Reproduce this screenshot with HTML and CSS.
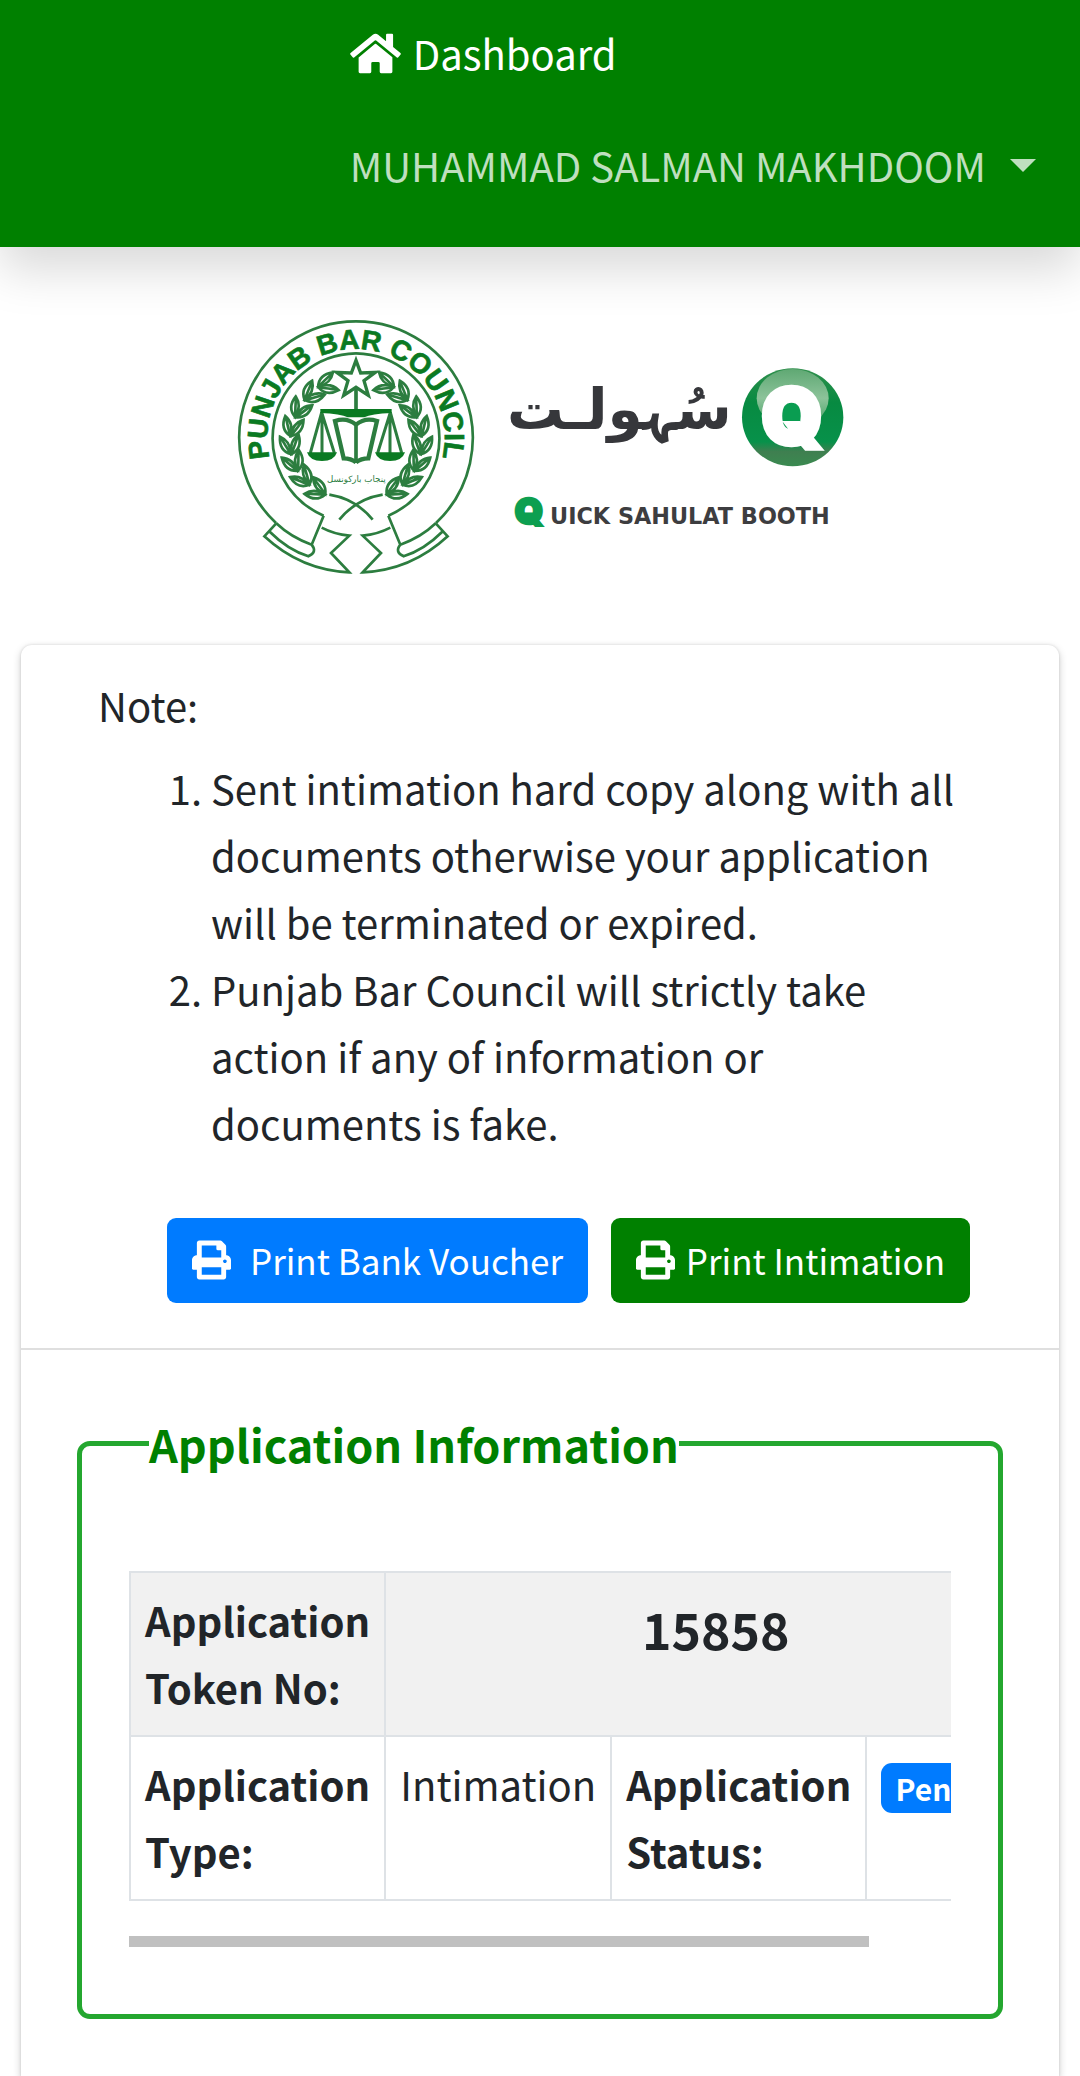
FILE: index.html
```html
<!DOCTYPE html>
<html lang="en">
<head>
<meta charset="utf-8">
<meta name="viewport" content="width=device-width, initial-scale=1">
<title>Punjab Bar Council</title>
<link rel="stylesheet" href="styles.css">
</head>
<body>
<svg class="sprite" aria-hidden="true">
  <symbol id="icon-print" viewBox="0 0 512 512">
    <path d="M448 192V77.250c0-8.490-3.370-16.620-9.370-22.630L393.370 9.370c-6-6-14.140-9.370-22.630-9.370H96C78.330 0 64 14.330 64 32v160c-35.350 0-64 28.650-64 64v112c0 8.840 7.160 16 16 16h48v96c0 17.670 14.330 32 32 32h320c17.670 0 32-14.330 32-32v-96h48c8.840 0 16-7.160 16-16V256c0-35.350-28.650-64-64-64zm-64 256H128v-96h256v96zm0-224H128V64h192v48c0 8.840 7.160 16 16 16h48v96zm48 72c-13.250 0-24-10.750-24-24s10.750-24 24-24 24 10.750 24 24-10.750 24-24 24z"/>
  </symbol>
</svg>

<nav class="navbar">
  <ul class="nav-list">
    <li>
      <a class="nav-link nav-link-active" href="#">
        <svg class="icon-home" viewBox="0 0 576 512" aria-hidden="true"><path d="M280.370 148.260L96 300.110V464a16 16 0 0 0 16 16l112.060-.29a16 16 0 0 0 15.920-16V368a16 16 0 0 1 16-16h64a16 16 0 0 1 16 16v95.640a16 16 0 0 0 16 16.050L464 480a16 16 0 0 0 16-16V300L295.670 148.260a12.190 12.190 0 0 0-15.300 0zM571.600 251.470L488 182.560V44.050a12 12 0 0 0-12-12h-56a12 12 0 0 0-12 12v72.610L318.470 43a48 48 0 0 0-61 0L4.340 251.470a12 12 0 0 0-1.600 16.900l25.500 31A12 12 0 0 0 45.150 301l235.220-193.740a12.190 12.190 0 0 1 15.300 0L530.900 301a12 12 0 0 0 16.900-1.600l25.500-31a12 12 0 0 0-1.700-16.930z"/></svg>
        Dashboard
      </a>
    </li>
    <li>
      <button class="nav-link nav-user" type="button" aria-haspopup="true">MUHAMMAD SALMAN MAKHDOOM<span class="caret"></span></button>
    </li>
  </ul>
</nav>

<header class="logos">
  <svg class="logo-council" viewBox="48 58 714 768" role="img" aria-label="Punjab Bar Council">
    <defs>
      <path id="ring-text" d="M175 548A266 266 0 1 1 635 548"/>
      <g id="leaves">
        <path d="M0 26Q-36 12-28-30Q2-14 0 26ZM0 26Q36 12 28-30Q-2-14 0 26ZM0 26Q-16-4-24-24M0 26Q16-4 24-24"/>
      </g>
      <g id="half">
        <path d="M165 670A350 350 0 0 1 405 65"/>
        <path d="M308 648A254 254 0 0 1 405 161"/>
        <path d="M308 648L272 735M165 670Q210 713 272 735Q290 758 262 770Q200 750 147 697M165 672L130 710Q240 812 385 818L330 760L385 708Q340 704 302 684"/>
        <path d="M325 585Q405 598 455 660"/>
        <use href="#leaves" transform="translate(316 254) rotate(72)"/>
        <use href="#leaves" transform="translate(270 284) rotate(48)"/>
        <use href="#leaves" transform="translate(235 330) rotate(28)"/>
        <use href="#leaves" transform="translate(214 384) rotate(12)"/>
        <use href="#leaves" transform="translate(208 438) rotate(-6)"/>
        <use href="#leaves" transform="translate(220 490) rotate(-24)"/>
        <use href="#leaves" transform="translate(248 536) rotate(-42)"/>
        <use href="#leaves" transform="translate(290 572) rotate(-62)"/>
        <path d="M302 338L268 460M302 338L340 460M303 340V460" stroke-width="9"/>
        <path d="M258 458H348Q340 484 303 484Q266 484 258 458Z" fill="#0a7a22" stroke="none"/>
        <path d="M405 375Q378 352 342 364L368 476Q390 476 405 488" stroke-width="13"/>
      </g>
    </defs>
    <g class="council-lines">
      <use href="#half"/>
      <use href="#half" transform="translate(810 0) scale(-1 1)"/>
      <path d="M405 182L419 220L463 218L429 243L442 287L405 263L368 287L381 243L347 218L391 220Z" stroke-width="10"/>
      <path d="M405 264V336M405 372V490" stroke-width="11"/>
      <path d="M298 328H512V340Q450 342 430 353H380Q360 342 298 340Z" class="council-solid"/>
    </g>
    <text class="council-name"><textPath href="#ring-text" startOffset="50%" text-anchor="middle">PUNJAB BAR COUNCIL</textPath></text>
    <text class="council-urdu" x="406" y="546" text-anchor="middle">پنجاب بارکونسل</text>
  </svg>

  <svg class="logo-sahulat" viewBox="48 54 1008 480" role="img" aria-label="Quick Sahulat Booth">
    <defs>
      <linearGradient id="ball" x1="0" y1="0" x2="0" y2="1">
        <stop offset="0" stop-color="#2f8f4c"/>
        <stop offset=".35" stop-color="#078a41"/>
        <stop offset=".75" stop-color="#07914a"/>
        <stop offset=".85" stop-color="#3f7f50"/>
        <stop offset="1" stop-color="#3a8a50"/>
      </linearGradient>
      <linearGradient id="shine" x1="0" y1="0" x2="0" y2="1">
        <stop offset="0" stop-color="#5fa873"/>
        <stop offset=".5" stop-color="#8cc39a"/>
        <stop offset="1" stop-color="#3f9d5f"/>
      </linearGradient>
    </defs>
    <text class="sahulat-urdu" x="382" y="240" text-anchor="middle">سُہولـت</text>
    <ellipse cx="902" cy="205" rx="152" ry="147" fill="url(#ball)"/>
    <ellipse cx="902" cy="148" rx="108" ry="88" fill="url(#shine)"/>
    <circle cx="900" cy="206" r="52" fill="#0a9d51"/>
    <text class="sahulat-q" x="900" y="284" text-anchor="middle">Q</text>
    <text class="sahulat-name" x="68" y="524"><tspan class="sahulat-initial">Q</tspan><tspan x="174">UICK SAHULAT BOOTH</tspan></text>
  </svg>
</header>

<main class="card">
  <section class="card-header">
    <p class="note-title">Note:</p>
    <ol class="note-list">
      <li>Sent intimation hard copy along with all documents otherwise your application will be terminated or expired.</li>
      <li>Punjab Bar Council will strictly take action if any of information or documents is fake.</li>
    </ol>
    <div class="actions">
      <button class="btn btn-primary" type="button"><svg class="icon-print" aria-hidden="true"><use href="#icon-print"/></svg>&nbsp; Print Bank Voucher</button>
      <button class="btn btn-success" type="button"><svg class="icon-print" aria-hidden="true"><use href="#icon-print"/></svg> Print Intimation</button>
    </div>
  </section>

  <section class="card-body">
    <fieldset class="info">
      <legend class="info-title">Application Information</legend>
      <div class="table-scroll">
        <table class="info-table">
          <tbody>
            <tr class="row-token">
              <th scope="row">Application Token No:</th>
              <td class="token" colspan="3">15858</td>
            </tr>
            <tr>
              <th scope="row">Application Type:</th>
              <td>Intimation</td>
              <th scope="row">Application Status:</th>
              <td><span class="badge">Pending</span></td>
            </tr>
          </tbody>
        </table>
      </div>
      <div class="scroll-track"><div class="scroll-thumb"></div></div>
    </fieldset>
  </section>
</main>
</body>
</html>
```
FILE: styles.css
```css
* {
  box-sizing: border-box;
}

body {
  margin: 0;
  background: #fff;
  color: #212529;
  font-family: "Noto Sans CJK SC", "Noto Sans", sans-serif;
  font-size: 40px;
  line-height: 67px;
}

.sprite {
  display: none;
}

/* Navigation */

.navbar {
  display: flex;
  justify-content: flex-end;
  padding: 20px 44px 48px;
  background: #008000;
  box-shadow: 0 23px 45px rgba(0, 0, 0, 0.15);
}

.nav-list {
  display: flex;
  flex-direction: column;
  gap: 45px;
  margin: 0;
  padding: 0;
  list-style: none;
}

.nav-link {
  display: flex;
  align-items: center;
  gap: 12px;
  padding: 0;
  border: 0;
  background: none;
  color: rgba(255, 255, 255, 0.75);
  font: inherit;
  text-decoration: none;
  white-space: nowrap;
}

.nav-link-active {
  color: #fff;
}

.nav-user {
  gap: 24px;
}

.icon-home {
  width: 51px;
  height: 45px;
  fill: currentColor;
}

.caret {
  border: 13px solid transparent;
  border-top-color: currentColor;
  border-bottom: 0;
}

/* Logos */

.logos {
  display: flex;
  justify-content: center;
  align-items: center;
  gap: 33px;
  padding: 72px 0 70px;
}

.logo-council {
  width: 238px;
  height: 256px;
}

.logo-sahulat {
  width: 336px;
  height: 160px;
  overflow: visible;
}

.council-lines {
  fill: none;
  stroke: #2c7d3f;
  stroke-width: 8px;
}

.council-solid {
  fill: #0a7a22;
  stroke: none;
}

.council-name {
  fill: #0a7a22;
  stroke: #0a7a22;
  stroke-width: 2px;
  font: bold 84px "Liberation Sans", Arial, sans-serif;
}

.council-urdu {
  fill: #2c7d3f;
  font: 26px "DejaVu Sans", sans-serif;
}

.sahulat-urdu {
  fill: #36373b;
  font: bold 170px "DejaVu Sans", sans-serif;
}

.sahulat-q {
  fill: #fff;
  stroke: #fff;
  stroke-width: 14px;
  font: 900 232px Inter, sans-serif;
}

.sahulat-name {
  fill: #3d3d40;
  font: bold 67px "DejaVu Sans", sans-serif;
}

.sahulat-initial {
  fill: #0d9f50;
  stroke: #0d9f50;
  stroke-width: 8px;
  font: 900 108px Inter, sans-serif;
}

/* Card */

.card {
  margin: 0 21px;
  border-radius: 11px 11px 0 0;
  background: #fff;
  box-shadow: 0 0 3px rgba(0, 0, 0, 0.13), 0 3px 8px rgba(0, 0, 0, 0.2);
}

.card-header {
  padding: 27px 77px 45px;
  border-bottom: 2px solid #dfdfdf;
}

.note-title {
  margin: 0 0 16px;
}

.note-list {
  margin: 0 0 61px;
  padding-left: 113px;
}

.actions {
  display: flex;
  justify-content: flex-end;
  gap: 23px;
  padding-right: 12px;
}

.btn {
  display: flex;
  align-items: center;
  height: 85px;
  padding: 0 25px 2px;
  border: 0;
  border-radius: 9px;
  color: #fff;
  font: inherit;
  font-size: 35px;
  line-height: 59px;
  white-space: pre;
}

.btn-primary {
  background: #007bff;
}

.btn-success {
  background: #008000;
}

.icon-print {
  width: 39px;
  height: 40px;
  margin-right: 3px;
  fill: currentColor;
}

/* Application information */

.card-body {
  padding: 60px 56px 58px;
}

.info {
  min-width: 0;
  margin: 0;
  padding: 94px 47px 67px;
  border: 5px solid #24a72f;
  border-radius: 13px;
}

.info-title {
  margin-left: 20px;
  padding: 0;
  color: #008000;
  font-size: 45px;
  font-weight: bold;
  line-height: 67px;
}

.table-scroll {
  overflow-x: auto;
  scrollbar-width: none;
}

.info-table {
  width: 918px;
  border-collapse: collapse;
}

.info-table th,
.info-table td {
  padding: 14px;
  border: 2px solid #dee2e6;
  text-align: left;
  vertical-align: top;
}

.row-token {
  background: #f1f1f1;
}

.info-table .token {
  font-size: 50px;
  font-weight: bold;
  line-height: 82px;
  text-align: center;
}

.badge {
  display: inline-block;
  padding: 0 14px;
  border-radius: 11px;
  background: #007bff;
  color: #fff;
  font-size: 30px;
  font-weight: bold;
  line-height: 50px;
}

.scroll-track {
  margin-top: 35px;
}

.scroll-thumb {
  width: 90%;
  height: 11px;
  background: #c0c0c0;
}
```
